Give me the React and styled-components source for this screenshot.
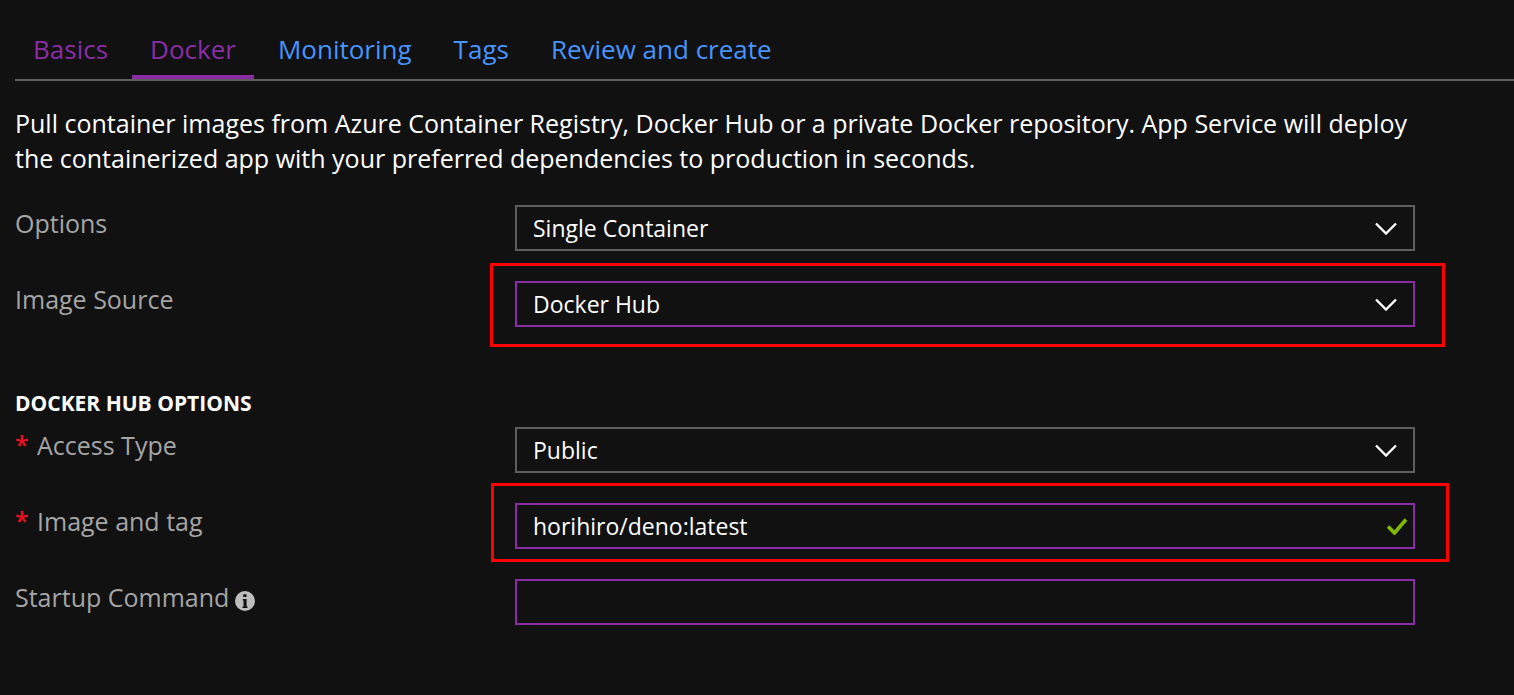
import React from "react";
import styled, { createGlobalStyle } from "styled-components";

const colors = {
  page: "#111111",
  text: "#ffffff",
  label: "#a5a5a5",
  line: "#605e5c",
  link: "#4894fe",
  accent: "#8a2da5",
  required: "#e81123",
  valid: "#7fba00",
  highlight: "#ff0000",
};

const GlobalStyle = createGlobalStyle`
  *, *::before, *::after { box-sizing: border-box; }
  body {
    margin: 0;
    background: ${colors.page};
    color: ${colors.text};
    font-family: "Open Sans", "Noto Sans", sans-serif;
    font-size: 25px;
  }
`;

const Page = styled.main`
  padding: 22px 0 70px 15px;
`;

const Tabs = styled.nav`
  display: flex;
  gap: 6px;
  border-bottom: 2px solid ${colors.line};
`;

const Tab = styled.a`
  padding: 9px 18px 8px;
  border-bottom: 4px solid ${(p) => (p.$active ? colors.accent : "transparent")};
  color: ${(p) => (p.$visited ? colors.accent : colors.link)};
  font-size: 26px;
  line-height: 36px;
  text-decoration: none;
  white-space: nowrap;
`;

const Body = styled.form`
  padding-right: 99px;
`;

const Intro = styled.p`
  margin: 0;
  padding: 25px 0 29px;
  line-height: 35px;
`;

const Section = styled.section`
  display: grid;
  gap: 30px;
`;

const SectionTitle = styled.h2`
  margin: 62px 0 10px;
  font-size: 21px;
  font-weight: 700;
  line-height: 28px;
`;

const Row = styled.div`
  display: grid;
  grid-template-columns: 500px minmax(0, 1fr);
  align-items: start;
`;

const LabelCell = styled.div`
  display: flex;
  align-items: center;
  gap: 6px;
  color: ${colors.label};
  line-height: 36px;
`;

const Required = styled.span`
  width: 16px;
  color: ${colors.required};
  font-weight: 600;
  line-height: 34px;
  align-self: start;
`;

const InfoButton = styled.button`
  display: flex;
  padding: 8px 0 0;
  border: 0;
  background: none;
`;

const Control = styled.div`
  position: relative;
  display: grid;
  align-items: center;
`;

const Field = styled.input`
  grid-area: 1 / 1;
  width: 100%;
  height: 46px;
  padding: 0 16px;
  border: 2px solid ${(p) => (p.$accent ? colors.accent : colors.line)};
  border-radius: 0;
  outline: 0;
  appearance: none;
  background: transparent;
  color: ${colors.text};
  font: inherit;
  font-size: 23px;
`;

const Adornment = styled.svg`
  grid-area: 1 / 1;
  justify-self: end;
  margin-right: ${(p) => p.$inset}px;
  fill: none;
  pointer-events: none;
`;

const Highlight = styled.span`
  position: absolute;
  inset: ${(p) => p.$inset};
  border: 3px solid ${colors.highlight};
  pointer-events: none;
`;

const Chevron = () => (
  <Adornment $inset={17} width="24" height="14" viewBox="0 0 24 14" aria-hidden="true">
    <path d="M2 2.500 12 12.500 22 2.500" stroke="#fff" strokeWidth="2.4" />
  </Adornment>
);

const Check = () => (
  <Adornment $inset={7} width="22" height="18" viewBox="0 0 22 18" aria-hidden="true">
    <path d="M2 9.500 8.500 16 20 2.500" stroke={colors.valid} strokeWidth="3.600" />
  </Adornment>
);

const InfoIcon = () => (
  <svg width="20" height="20" viewBox="0 0 20 20" aria-hidden="true">
    <circle cx="10" cy="10" r="10" fill="#bdbdbd" />
    <path d="M8.300 3.200h3.200v2.800H8.300zM7.800 8h3.800v7.500h.9v1.500H7.500v-1.500h1V9.500h-.7z" fill={colors.page} />
  </svg>
);

function FormRow({ id, label, required, info, highlight, children }) {
  return (
    <Row>
      <LabelCell>
        {required && <Required aria-hidden="true">*</Required>}
        <label htmlFor={id}>{label}</label>
        {info && (
          <InfoButton type="button" aria-label={`About ${label}`}>
            <InfoIcon />
          </InfoButton>
        )}
      </LabelCell>
      <Control>
        {children}
        {highlight && <Highlight $inset={highlight} />}
      </Control>
    </Row>
  );
}

function Dropdown({ id, value, accent }) {
  return (
    <>
      <Field as="select" id={id} defaultValue={value} $accent={accent}>
        <option>{value}</option>
      </Field>
      <Chevron />
    </>
  );
}

const tabs = [
  { name: "Basics", visited: true },
  { name: "Docker", visited: true, active: true },
  { name: "Monitoring" },
  { name: "Tags" },
  { name: "Review and create" },
];

export default function App() {
  return (
    <>
      <GlobalStyle />
      <Page>
        <Tabs>
          {tabs.map((tab) => (
            <Tab
              key={tab.name}
              href="#"
              $visited={tab.visited}
              $active={tab.active}
              aria-current={tab.active ? "page" : undefined}
            >
              {tab.name}
            </Tab>
          ))}
        </Tabs>
        <Body>
          <Intro>
            Pull container images from Azure Container Registry, Docker Hub or a private Docker
            repository. App Service will deploy the containerized app with your preferred
            dependencies to production in seconds.
          </Intro>
          <Section>
            <FormRow id="options" label="Options">
              <Dropdown id="options" value="Single Container" />
            </FormRow>
            <FormRow id="source" label="Image Source" highlight="-18px -30px -20px -25px">
              <Dropdown id="source" value="Docker Hub" accent />
            </FormRow>
          </Section>
          <SectionTitle>DOCKER HUB OPTIONS</SectionTitle>
          <Section>
            <FormRow id="access" label="Access Type" required>
              <Dropdown id="access" value="Public" />
            </FormRow>
            <FormRow id="image" label="Image and tag" required highlight="-20px -34px -13px -24px">
              <Field id="image" type="text" defaultValue="horihiro/deno:latest" $accent />
              <Check />
            </FormRow>
            <FormRow id="command" label="Startup Command" info>
              <Field id="command" type="text" $accent />
            </FormRow>
          </Section>
        </Body>
      </Page>
    </>
  );
}
